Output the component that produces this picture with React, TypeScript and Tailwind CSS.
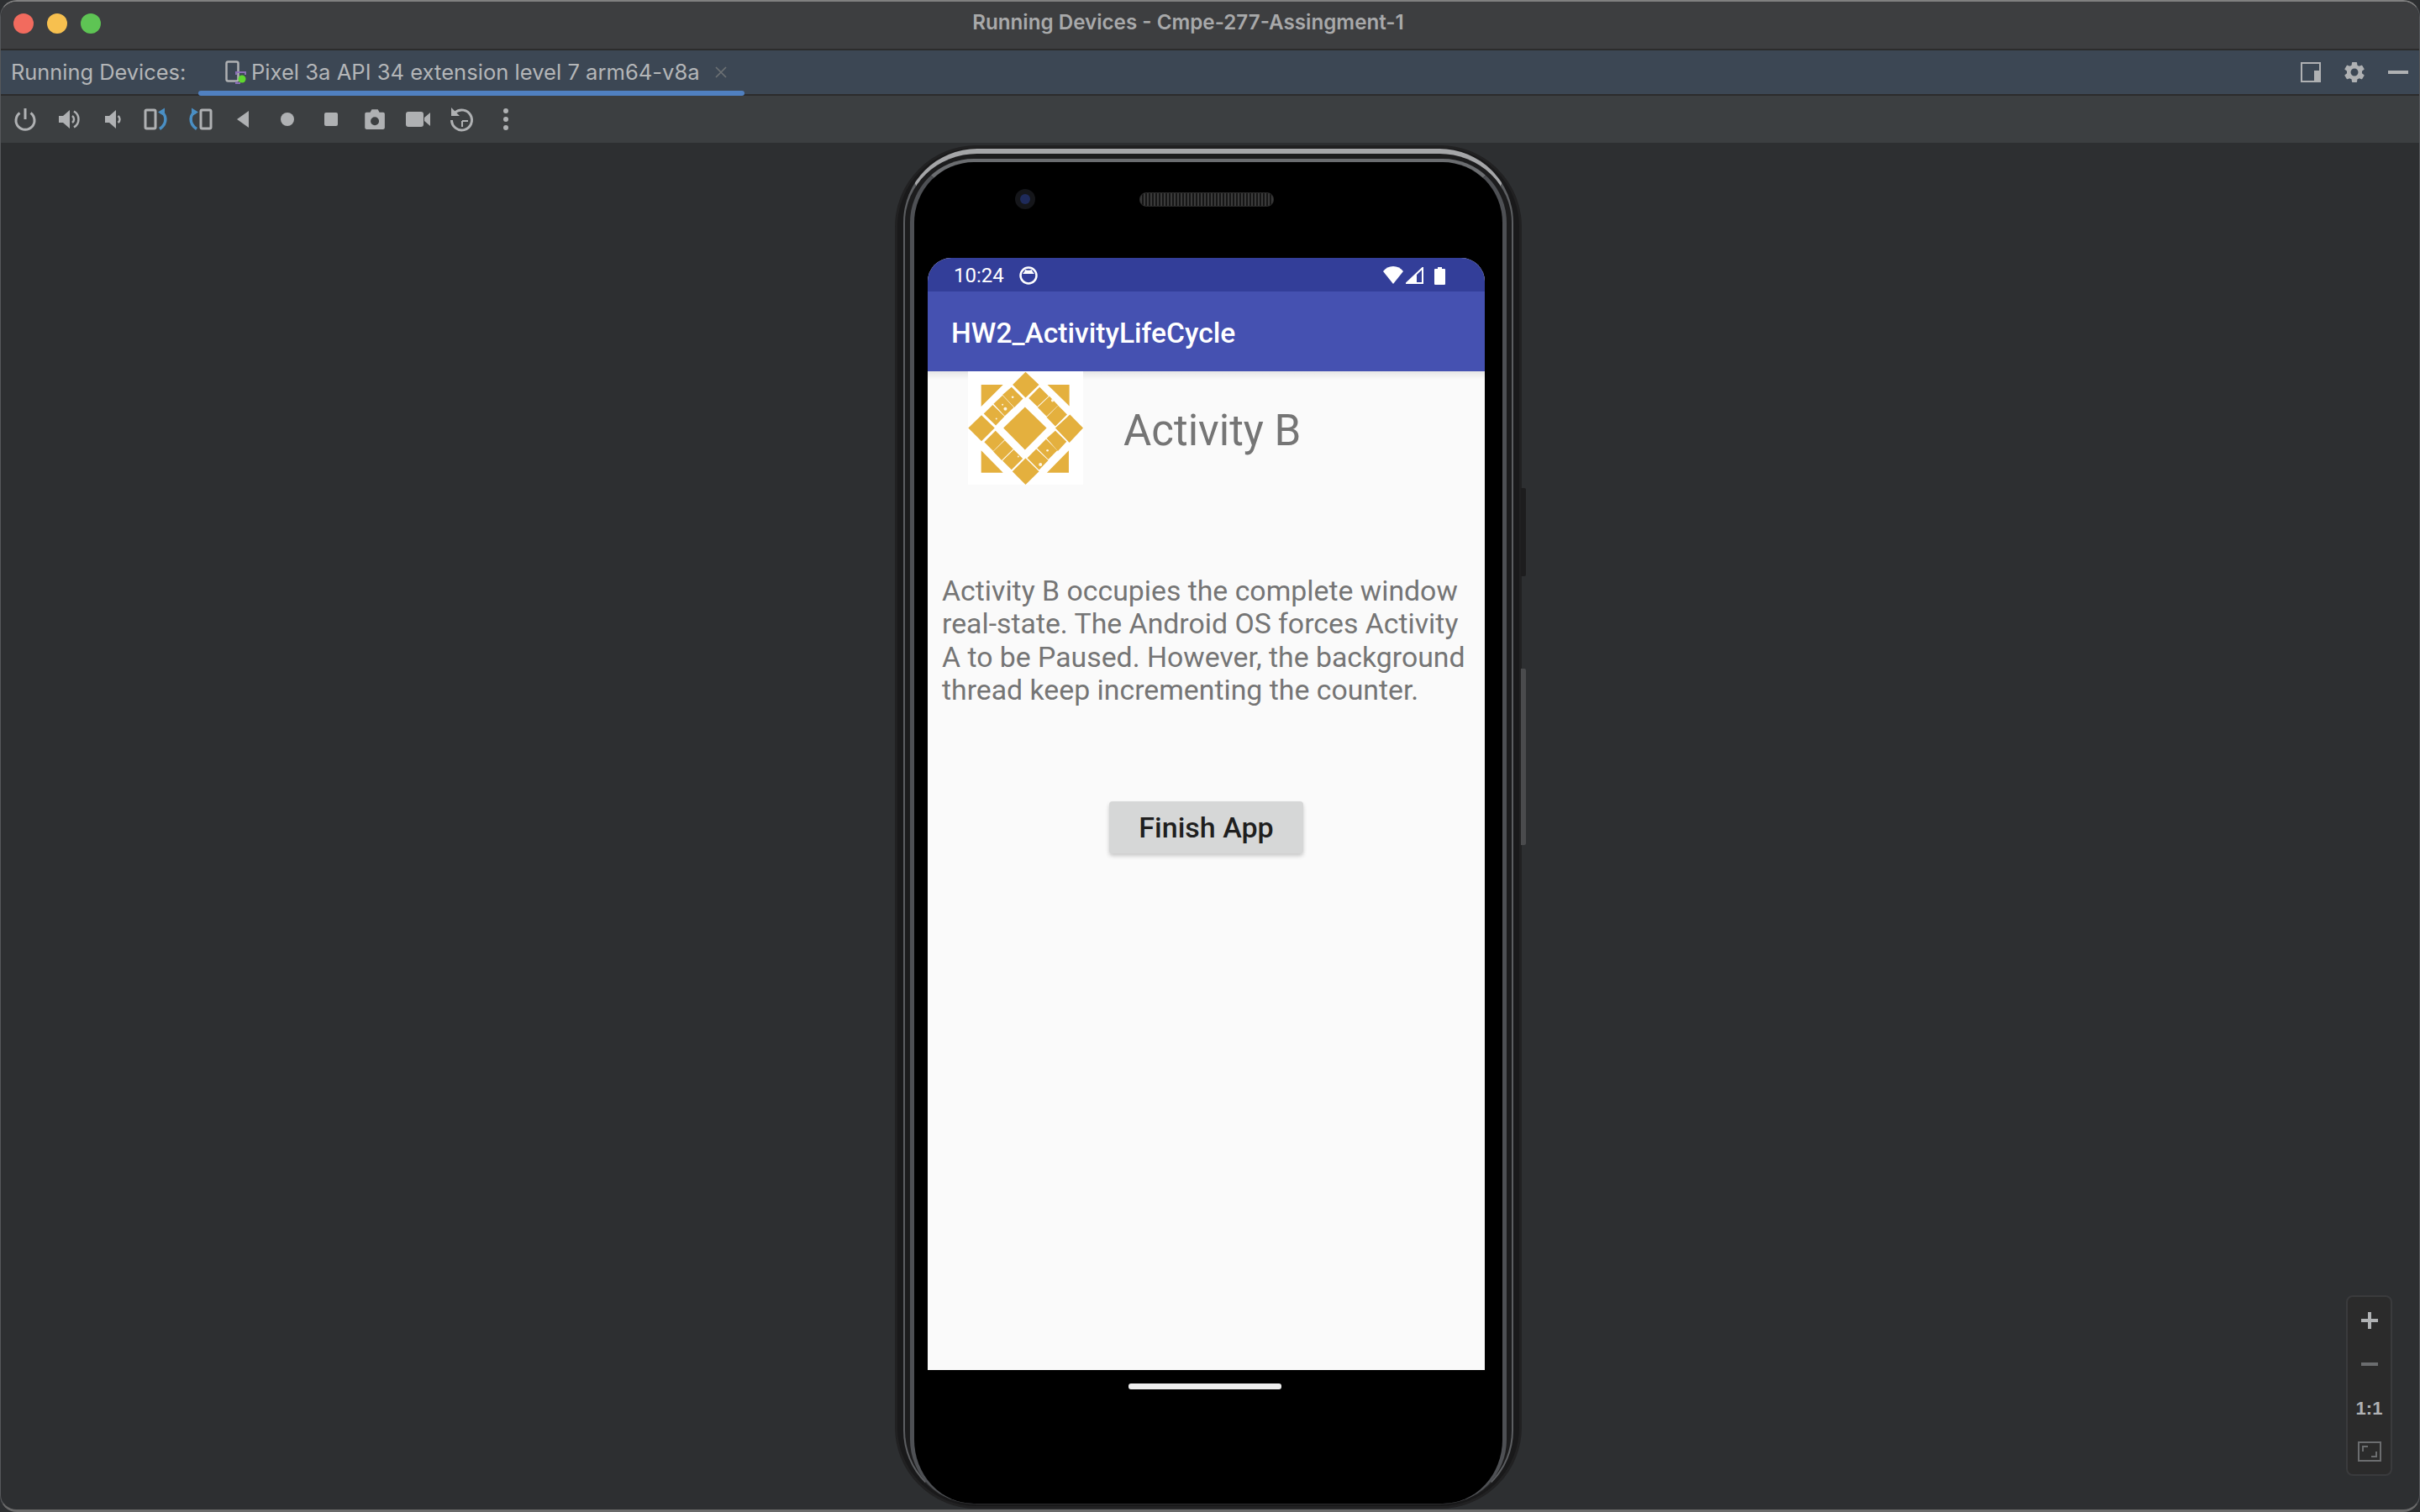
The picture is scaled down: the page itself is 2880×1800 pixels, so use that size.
import React from "react";
import { MdSettings } from "react-icons/md";

const G = "#afb1b3";
const B = "#4a8fc4";

function Ic({ children }: { children: React.ReactNode }) {
  return (
    <div className="flex h-[52px] w-[52px] items-center justify-center">
      <svg width="32" height="32" viewBox="0 0 32 32" fill="none">{children}</svg>
    </div>
  );
}

function Toolbar() {
  return (
    <div className="flex h-[56px] items-center bg-[#3c3f41] pl-[3px]">
      <Ic>
        <path d="M9.5 8.5a11 11 0 1 0 13 0" stroke={G} strokeWidth="3" />
        <rect x="14.5" y="3" width="3" height="13" fill={G} />
      </Ic>
      <Ic>
        <path d="M4 12h5l8-7v22l-8-7H4z" fill={G} />
        <path d="M20 12a5 5 0 0 1 0 8" stroke={G} strokeWidth="2.5" />
        <path d="M22 6.5a11 11 0 0 1 0 19" stroke={G} strokeWidth="2.5" />
      </Ic>
      <Ic>
        <path d="M7 12h5l8-7v22l-8-7H7z" fill={G} />
        <path d="M22.5 12a5 5 0 0 1 0 8" stroke={G} strokeWidth="2.5" />
      </Ic>
      <Ic>
        <rect x="3" y="5" width="12" height="22" rx="1.5" stroke={G} strokeWidth="3" />
        <path d="M21 7.5C28 9 30 21 20 27.5" stroke={B} strokeWidth="3.5" />
        <path d="M26 2.5v10l-8-5z" fill={B} />
      </Ic>
      <Ic>
        <rect x="17" y="5" width="12" height="22" rx="1.5" stroke={G} strokeWidth="3" />
        <path d="M11 7.5C4 9 2 21 12 27.5" stroke={B} strokeWidth="3.5" />
        <path d="M6 2.5v10l8-5z" fill={B} />
      </Ic>
      <Ic>
        <path d="M22 6v20L8 16z" fill={G} />
      </Ic>
      <Ic>
        <circle cx="16" cy="16" r="8" fill={G} />
      </Ic>
      <Ic>
        <rect x="8" y="8" width="16" height="16" rx="2" fill={G} />
      </Ic>
      <Ic>
        <path fillRule="evenodd" d="M5 7h5l2-4h8l2 4h5a2 2 0 0 1 2 2v18a2 2 0 0 1-2 2H5a2 2 0 0 1-2-2V9a2 2 0 0 1 2-2zm11 6a5.5 5.5 0 1 0 0 11 5.5 5.5 0 0 0 0-11z" fill={G} transform="translate(1.5 1.5) scale(.91)" />
      </Ic>
      <Ic>
        <path d="M4 7h15a3 3 0 0 1 3 3v12a3 3 0 0 1-3 3H4a3 3 0 0 1-3-3V10a3 3 0 0 1 3-3z" fill={G} />
        <path d="M23 14l7-6v16l-7-6z" fill={G} />
      </Ic>
      <Ic>
        <path d="M7.5 8a12 12 0 1 1-4 9" stroke={G} strokeWidth="3" />
        <path d="M3 2v10h10z" fill={G} />
        <path d="M16 18h7M16 18v7" stroke={G} strokeWidth="2" />
      </Ic>
      <Ic>
        <circle cx="16" cy="6" r="3" fill={G} />
        <circle cx="16" cy="16" r="3" fill={G} />
        <circle cx="16" cy="26" r="3" fill={G} />
      </Ic>
    </div>
  );
}

function TabBar() {
  return (
    <div className="flex h-[52px] items-center bg-[#3c4754] pl-[12px] pr-[13px] text-[25.4px] text-[#b4b6b8]">
      <span className="w-[223px] whitespace-nowrap">Running Devices:</span>
      <div className="relative flex h-[52px] w-[650px] items-center pl-[32px] text-[25.6px]">
        <svg width="26" height="28" viewBox="0 0 26 28" fill="none" className="mr-[5px]">
          <rect x="1.5" y="1.5" width="14" height="23" rx="2" stroke={G} strokeWidth="2.5" />
          <path d="M13 17v-3h11v3M13 25v2h5" stroke="#8a6fb5" strokeWidth="2" />
          <circle cx="20" cy="22" r="4.5" fill="#5fd62f" />
        </svg>
        <span className="whitespace-nowrap">Pixel 3a API 34 extension level 7 arm64-v8a</span>
        <svg width="16" height="16" viewBox="0 0 16 16" className="ml-[17px]">
          <path d="M2 2l12 12M14 2L2 14" stroke="#6e7275" strokeWidth="1.6" />
        </svg>
        <div className="absolute bottom-[-2px] left-0 right-0 h-[6px] rounded-full bg-[#5080c0]" />
      </div>
      <div className="ml-auto flex items-center gap-[25px]">
        <svg width="24" height="24" viewBox="0 0 24 24" fill="none">
          <rect x="1" y="1" width="22" height="22" stroke={G} strokeWidth="2" />
          <rect x="16" y="10" width="8" height="14" fill={G} />
        </svg>
        <MdSettings size={30} color={G} />
        <div className="h-[4px] w-[24px] bg-[#afb1b3]" />
      </div>
    </div>
  );
}

function Logo() {
  const c = "#e4b03e";
  const polys = [
    "362,38 410,84 362,130 316,84",
    "362,346 410,393 362,440 315,393",
    "205,192 252,238 205,285 158,238",
    "520,190 567,238 518,290 468,238",
    "360,163 437,238 360,316 283,238",
    "204,84 282,84 204,162",
    "440,84 518,84 518,160",
    "204,318 282,397 204,397",
    "516,318 516,397 438,397",
    "213,187 245,156 287,197 256,229",
    "248,152 280,122 320,165 288,195",
    "280,120 312,92 353,133 322,165",
    "373,132 412,92 444,124 404,162",
    "405,165 447,125 478,157 437,197",
    "437,200 478,158 510,190 468,232",
    "215,288 255,248 287,280 247,320",
    "247,322 288,282 318,313 277,353",
    "280,355 320,315 352,347 312,387",
    "368,345 400,313 443,353 410,388",
    "403,310 435,278 475,318 443,350",
    "437,275 468,248 508,287 477,320",
  ];
  return (
    <svg width="137" height="135" viewBox="157 36 410 404" className="shrink-0 bg-white">
      {polys.map((p) => (
        <polygon key={p} points={p} fill={c} />
      ))}
      <g fill="#fdf6e6">
        <circle cx="290" cy="170" r="6" />
        <circle cx="280" cy="155" r="3" />
        <circle cx="316" cy="128" r="4" />
        <circle cx="458" cy="140" r="5" />
        <circle cx="415" cy="368" r="6" />
        <circle cx="440" cy="318" r="4" />
        <circle cx="336" cy="340" r="3" />
        <circle cx="258" cy="205" r="3" />
      </g>
    </svg>
  );
}

function Screen() {
  return (
    <div className="ml-[16px] flex h-[1324px] w-[663px] flex-col overflow-hidden rounded-t-[28px] bg-[#fafafa] font-['Roboto',sans-serif]">
      <div className="flex h-[40px] shrink-0 items-center bg-[#333e99] pl-[31px] pr-[47px] pt-[2px] text-[24px] text-white">
        <span>10:24</span>
        <svg width="22" height="22" viewBox="0 0 22 22" className="ml-[18px]">
          <circle cx="11" cy="11" r="9.5" fill="none" stroke="#fff" strokeWidth="2.5" />
          <path d="M4 9c2-2 3-4 3-5 2 1 6 1 8 0 0 1 1 3 3 5z" fill="#fff" />
        </svg>
        <div className="ml-auto flex items-center">
          <svg width="24" height="22" viewBox="0 0 24 22">
            <path d="M12 21L0 6C3 2 7 0 12 0s9 2 12 6z" fill="#fff" />
          </svg>
          <svg width="22" height="20" viewBox="0 0 22 20" className="ml-[3px]" fill="none">
            <path d="M1 19L20 1v18z" stroke="#fff" strokeWidth="2" />
            <path d="M1 19h12V8z" fill="#fff" />
          </svg>
          <svg width="13" height="21" viewBox="0 0 13 21" className="ml-[12px]">
            <path d="M4 0h5v2h3a1 1 0 0 1 1 1v17a1 1 0 0 1-1 1H1a1 1 0 0 1-1-1V3a1 1 0 0 1 1-1h3z" fill="#fff" />
          </svg>
        </div>
      </div>
      <div className="flex h-[95px] shrink-0 items-center bg-[#4551b1] pl-[28px] pt-[6px] text-[33.6px] font-medium text-white">
        HW2_ActivityLifeCycle
      </div>
      <div className="relative flex-1">
        <div className="absolute inset-x-0 top-0 h-[10px] bg-gradient-to-b from-[#e6e6e6] to-[#fafafa]" />
        <div className="relative flex items-center pl-[48px]">
          <Logo />
          <span className="ml-[48px] pt-[8px] text-[51px] text-[#757575]">Activity B</span>
        </div>
        <p className="mt-[107px] px-[17px] text-[33.8px] leading-[39.4px] text-[#757575]">
          Activity B occupies the complete window real-state. The Android OS forces Activity A to be Paused. However, the background thread keep incrementing the counter.
        </p>
        <div className="mt-[112px] flex pl-[216px]">
          <div className="flex h-[62px] w-[231px] items-center justify-center rounded-[4px] bg-[#d6d7d7] pt-[2px] text-[34px] font-medium text-[#1f1f1f] shadow-[0_3px_5px_rgba(0,0,0,0.2)]">
            Finish App
          </div>
        </div>
      </div>
    </div>
  );
}

function Phone() {
  return (
    <div className="relative mt-[3px] ml-[1064px] h-[1623px] w-[746px] rounded-[97px] border-[3px] border-[#212122] bg-[#19191a]">
      <div className="absolute right-[-8px] top-[405px] h-[105px] w-[6px] rounded-r-[2px] bg-[#1d1d1e]" />
      <div className="absolute right-[-8px] top-[620px] h-[210px] w-[6px] rounded-r-[2px] bg-[#4a4b4d]" />
      <div className="mx-[7px] mt-[1px] h-[1614px] rounded-[88px] border-x-[2px] border-t-[6px] border-b-[2px] border-x-[#5c5e61] border-t-[#a5a6a8] border-b-[#2a2a2b] bg-[#1c1c1d] px-[6px] pt-[6px]">
        <div className="h-[1601px] rounded-[76px] border-x-[5px] border-t-[4px] border-x-[#4e5054] border-t-[#6b6d70] border-b-[0px] bg-black">
          <div className="flex h-[114px] items-start pl-[120px] pt-[32px]">
            <div className="flex h-[24px] w-[24px] items-center justify-center rounded-full bg-[#15161a]">
              <div className="h-[12px] w-[12px] rounded-full bg-[#1e2a5a]" />
            </div>
            <div className="ml-[124px] mt-[4px] h-[17px] w-[160px] rounded-[8px] border border-[#2a2a2a] bg-[repeating-linear-gradient(90deg,#3a3a3a_0,#3a3a3a_2px,#161616_2px,#161616_4px)]" />
          </div>
          <Screen />
          <div className="ml-[255px] mt-[16px] h-[7px] w-[182px] rounded-[3px] bg-[#eeeeee]" />
        </div>
      </div>
    </div>
  );
}

function ZoomControls() {
  return (
    <div className="absolute bottom-[40px] right-[32px] flex h-[215px] w-[55px] flex-col items-center rounded-[8px] border-2 border-[#3a3b3d] bg-[#2b2b2b] pt-[2px]">
      <div className="flex h-[52px] w-full shrink-0 items-center justify-center">
        <svg width="20" height="20" viewBox="0 0 20 20">
          <path d="M10 0v20M0 10h20" stroke="#b0b2b4" strokeWidth="4" />
        </svg>
      </div>
      <div className="flex h-[52px] w-full shrink-0 items-center justify-center">
        <div className="h-[4px] w-[20px] bg-[#6b6d6f]" />
      </div>
      <div className="flex h-[52px] w-full shrink-0 items-center justify-center font-['Liberation_Sans',sans-serif] text-[22px] font-bold text-[#b0b2b4]">
        1:1
      </div>
      <div className="flex h-[52px] w-full shrink-0 items-center justify-center">
        <svg width="28" height="24" viewBox="0 0 28 24" fill="none">
          <rect x="1" y="1" width="26" height="22" stroke="#6b6d6f" strokeWidth="2" />
          <path d="M6 12V6h6M22 12v6h-6" stroke="#6b6d6f" strokeWidth="2" />
        </svg>
      </div>
    </div>
  );
}

export default function App() {
  return (
    <div className="h-[1800px] w-[2880px] bg-[#2d2f31] font-['Inter','Liberation_Sans',sans-serif]">
      <div className="flex h-[1800px] w-[2880px] flex-col overflow-hidden rounded-[20px] border-b-[3px] border-t-[2px] border-x-[1px] border-x-[#55575a] border-t-[#808080] border-b-[#6a6a6a] bg-[#2d2f31]">
        <div className="relative flex h-[58px] shrink-0 items-center justify-center border-b-[2px] border-[#2c2c2c] bg-[#3d3e40] pb-[6px] pr-[52px]">
          <div className="absolute left-[15px] top-[14px] flex gap-[16px]">
            <div className="h-[24px] w-[24px] rounded-full bg-[#f26b5e]" />
            <div className="h-[24px] w-[24px] rounded-full bg-[#f7c04f]" />
            <div className="h-[24px] w-[24px] rounded-full bg-[#5ec454]" />
          </div>
          <span className="text-[24.2px] font-semibold text-[#a8a9aa]">Running Devices - Cmpe-277-Assingment-1</span>
        </div>
        <TabBar />
        <div className="h-[2px] shrink-0 bg-[#2c2c2c]" />
        <Toolbar />
        <div className="relative flex-1 overflow-hidden">
          <Phone />
          <ZoomControls />
        </div>
      </div>
    </div>
  );
}
